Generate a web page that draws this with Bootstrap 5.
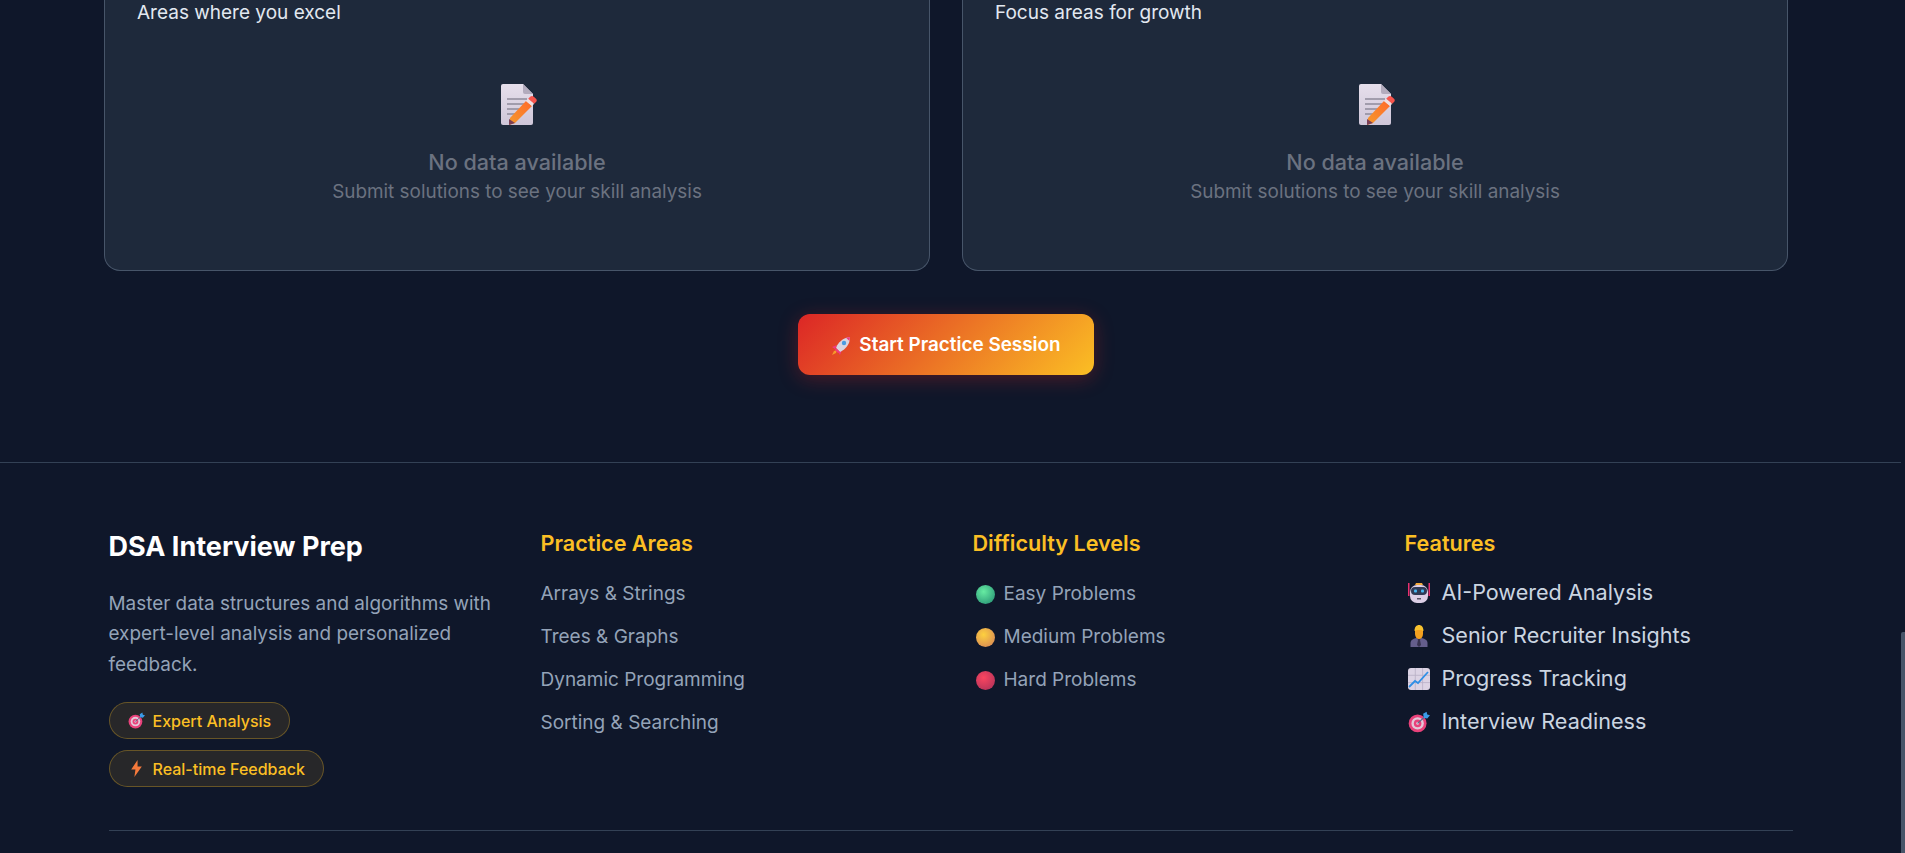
<!DOCTYPE html>
<html lang="en">
<head>
    <meta charset="UTF-8">
    <title>DSA Interview Prep</title>
    <link href="https://cdn.jsdelivr.net/npm/bootstrap@5.3.2/dist/css/bootstrap.min.css" rel="stylesheet">
    <style>
        html, body { height: 853px; overflow: hidden; }
        body {
            background: #0f172a;
            font-family: "Inter", "Liberation Sans", sans-serif;
            margin-right: 4px;
            position: relative;
        }
        .thumb-bar {
            position: fixed; top: 632px; right: 0; bottom: 0; width: 4px;
            background: #475569; border-top-left-radius: 2px;
        }
        .page-main { width: 1684px; margin-left: 104px; }
        .skill-grid { display: grid; grid-template-columns: 1fr 1fr; gap: 32px; }
        .skill-panel {
            height: 271px;
            background: #1e293b;
            border: 1px solid #475569;
            border-top: 0;
            border-radius: 0 0 16px 16px;
            padding: 0 32px;
        }
        .skill-sub { color: #e2e8f0; font-size: 19px; line-height: 25px; }
        .empty-state { text-align: center; padding-top: 59px; }
        .empty-state svg { display: block; margin: 0 auto 23px; }
        .empty-title { color: #6b7280; font-size: 21.6px; font-weight: 500; line-height: 28px; margin-bottom: 2px; }
        .empty-text { color: #6b7280; font-size: 18.9px; line-height: 28px; }
        .start-btn {
            width: 296px; height: 61px; margin-top: 43px; padding-top: 8px;
            border: 0; border-radius: 12px;
            background: linear-gradient(135deg, #dc2626, #fbbf24);
            box-shadow: 0 4px 20px rgba(220, 38, 38, .3);
            color: #fff; font-size: 18.9px; font-weight: 600;
        }
        .site-foot { margin-top: 87px; border-top: 1px solid #334155; padding-top: 65px; }
        .foot-wrap { width: 1684px; margin: 0 auto; }
        .foot-grid { display: grid; grid-template-columns: repeat(4, 1fr); column-gap: 44px; }
        .foot-brand { color: #fff; font-size: 27px; font-weight: 700; line-height: 38px; margin-bottom: 23px; }
        .foot-desc { color: #94a3b8; font-size: 18.9px; line-height: 30.4px; margin-bottom: 22px; }
        .foot-chip {
            display: inline-flex; align-items: center; gap: 8px;
            height: 37px; padding: 0 18px 0 18px;
            background: rgba(251, 191, 36, .1);
            border: 1px solid rgba(251, 191, 36, .3);
            border-radius: 19px;
            color: #fbbf24; font-size: 16px; font-weight: 500;
        }
        .chip-line { margin-bottom: 11px; }
        .foot-head { color: #fbbf24; font-size: 21.6px; font-weight: 600; line-height: 30px; margin-bottom: 15px; }
        .foot-list { list-style: none; margin: 0; padding: 0; }
        .foot-list li { height: 43px; display: flex; align-items: center; color: #94a3b8; font-size: 19px; }
        .foot-list .dot-icon { margin: 0 9px 0 3px; }
        .foot-list.feat-list { margin-top: -2px; }
        .feat-list li { color: #cbd5e1; font-size: 21.6px; }
        .feat-list svg { margin: 0 12px 0 3px; }
        .foot-line { border-top: 1px solid #334155; margin-top: 43px; }
    </style>
</head>
<body>
    <svg width="0" height="0" class="position-absolute">
        <defs>
            <linearGradient id="gPaper" x1="0" y1="0" x2="0" y2="1"><stop offset="0" stop-color="#e6dfec"/><stop offset="1" stop-color="#cfc6d8"/></linearGradient>
            <linearGradient id="gPencil" x1="0" y1="1" x2="1" y2="0"><stop offset="0" stop-color="#f59a2c"/><stop offset="1" stop-color="#ff6a2c"/></linearGradient>
            <radialGradient id="gGreen" cx=".4" cy=".35" r=".7"><stop offset="0" stop-color="#66eba2"/><stop offset="1" stop-color="#2f9e7a"/></radialGradient>
            <radialGradient id="gYellow" cx=".4" cy=".35" r=".7"><stop offset="0" stop-color="#fdd03f"/><stop offset="1" stop-color="#db8f52"/></radialGradient>
            <radialGradient id="gRed" cx=".4" cy=".35" r=".7"><stop offset="0" stop-color="#fb4560"/><stop offset="1" stop-color="#b8345a"/></radialGradient>
            <symbol id="icoTarget" viewBox="0 0 32 32">
                <circle cx="14" cy="18" r="13" fill="#e8417a"/>
                <circle cx="14" cy="18" r="9" fill="#e3c8d8"/>
                <circle cx="14" cy="18" r="5.5" fill="#e8417a"/>
                <circle cx="14" cy="18" r="2" fill="#e3c8d8"/>
                <path d="M14 18 26 7" stroke="#5b6b8c" stroke-width="1.8"/>
                <path d="M22 4l5-3 1 4 4 1-4 5-5-1z" fill="#3a9be8"/>
            </symbol>
            <symbol id="icoMemo" viewBox="-4 0 40 41">
                <path d="M2 0h20l10 10v29a2 2 0 0 1-2 2H2a2 2 0 0 1-2-2V2a2 2 0 0 1 2-2z" fill="url(#gPaper)"/>
                <path d="M22 0l10 10h-8a2 2 0 0 1-2-2z" fill="#b3abbd"/>
                <path d="M6 15h20M6 20h20M6 25h15M6 30h9" stroke="#8f8a9b" stroke-width="1.7"/>
                <path d="M9 34 25 17l6 5-17 17-6 2z" fill="url(#gPencil)"/>
                <path d="M25 17l2.2-2.2 6 5L31 22z" fill="#f1dfe0"/>
                <path d="M27.2 14.800l2-2c1-1 2.600-1 3.600 0l2.200 2c1 1 1 2.400 0 3.300l-1.800 1.700z" fill="#f8554c"/>
                <path d="M8 35l6 4-6 2z" fill="#7b3f55"/>
            </symbol>
        </defs>
    </svg>

    <main class="page-main">
        <div class="skill-grid">
            <div class="skill-panel">
                <div class="skill-sub">Areas where you excel</div>
                <div class="empty-state">
                    <svg width="40" height="41"><use href="#icoMemo"/></svg>
                    <div class="empty-title">No data available</div>
                    <div class="empty-text">Submit solutions to see your skill analysis</div>
                </div>
            </div>
            <div class="skill-panel">
                <div class="skill-sub">Focus areas for growth</div>
                <div class="empty-state">
                    <svg width="40" height="41"><use href="#icoMemo"/></svg>
                    <div class="empty-title">No data available</div>
                    <div class="empty-text">Submit solutions to see your skill analysis</div>
                </div>
            </div>
        </div>
        <div class="d-flex justify-content-center">
            <button class="btn start-btn d-flex align-items-center justify-content-center gap-2">
                <svg width="20" height="20" viewBox="0 0 20 20">
                    <path d="M6 9 1 11l3 2zM11 14l-2 5-2-3z" fill="#f0397f"/>
                    <path d="M6 14l-3 1-2 4 4-2z" fill="#f59a2c"/>
                    <path d="M5 12C7 6 12 2 19 1c0 7-4 12-10 15z" fill="#d9d4e0"/>
                    <path d="M5 12l4 4-2 1-3-3z" fill="#f0397f"/>
                    <path d="M15 1.800 19 1l-.6 4z" fill="#f0397f"/>
                    <circle cx="13" cy="7" r="2.200" fill="#4a9be0"/>
                </svg>
                <span>Start Practice Session</span>
            </button>
        </div>
    </main>

    <footer class="site-foot">
        <div class="foot-wrap">
            <div class="foot-grid">
                <div>
                    <div class="foot-brand">DSA Interview Prep</div>
                    <p class="foot-desc">Master data structures and algorithms with expert-level analysis and personalized feedback.</p>
                    <div class="chip-line">
                        <span class="foot-chip"><svg width="17" height="17"><use href="#icoTarget"/></svg>Expert Analysis</span>
                    </div>
                    <div>
                        <span class="foot-chip">
                            <svg width="17" height="17" viewBox="0 0 16 16"><path d="M9 0 3 9h4l-1 7 7-10H9z" fill="#f5793b"/></svg>Real-time Feedback
                        </span>
                    </div>
                </div>
                <div>
                    <div class="foot-head">Practice Areas</div>
                    <ul class="foot-list">
                        <li>Arrays &amp; Strings</li>
                        <li>Trees &amp; Graphs</li>
                        <li>Dynamic Programming</li>
                        <li>Sorting &amp; Searching</li>
                    </ul>
                </div>
                <div>
                    <div class="foot-head">Difficulty Levels</div>
                    <ul class="foot-list">
                        <li><svg class="dot-icon" width="19" height="19"><circle cx="9.500" cy="9.500" r="9.500" fill="url(#gGreen)"/></svg>Easy Problems</li>
                        <li><svg class="dot-icon" width="19" height="19"><circle cx="9.500" cy="9.500" r="9.500" fill="url(#gYellow)"/></svg>Medium Problems</li>
                        <li><svg class="dot-icon" width="19" height="19"><circle cx="9.500" cy="9.500" r="9.500" fill="url(#gRed)"/></svg>Hard Problems</li>
                    </ul>
                </div>
                <div>
                    <div class="foot-head">Features</div>
                    <ul class="foot-list feat-list">
                        <li>
                            <svg width="22" height="22" viewBox="0 0 22 22">
                                <path d="M7 3l1-2h6l1 2z" fill="#f2a93b"/>
                                <rect x="0" y="1" width="1.500" height="13" fill="#e8306f"/>
                                <rect x="20.500" y="1" width="1.500" height="13" fill="#e8306f"/>
                                <rect x="2" y="3" width="18" height="18" rx="7" fill="#dccfe6"/>
                                <rect x="3" y="5" width="16" height="8" rx="4" fill="#2f3a55"/>
                                <rect x="6" y="7.500" width="3" height="3" rx="1" fill="#49b6f0"/>
                                <rect x="13" y="7.500" width="3" height="3" rx="1" fill="#49b6f0"/>
                                <rect x="9" y="16" width="4" height="1.500" fill="#5a5468"/>
                            </svg>
                            AI-Powered Analysis
                        </li>
                        <li>
                            <svg width="22" height="22" viewBox="0 0 22 22">
                                <path d="M2.500 22v-4c0-3 3-5 8.500-5s8.500 2 8.500 5v4z" fill="#645e8c"/>
                                <path d="M9 13h4l-1 2 1 5-2 2-2-2 1-5z" fill="#37324f"/>
                                <path d="M7 5h8v4c0 3-2 5-4 5s-4-2-4-5z" fill="#f3a01f"/>
                                <path d="M6.500 6c0-4 2-6 4.500-6s4.500 2 4.500 6c-2-1.500-7-1.500-9 0z" fill="#f8c22e"/>
                            </svg>
                            Senior Recruiter Insights
                        </li>
                        <li>
                            <svg width="22" height="22" viewBox="0 0 22 22">
                                <rect x="0" y="0" width="22" height="22" rx="3" fill="#dcd3e4"/>
                                <path d="M7.300 0v22M14.600 0v22M0 7.300h22M0 14.600h22" stroke="#b9afc5" stroke-width=".8"/>
                                <path d="M1 19l6-6 3 2 10-11" fill="none" stroke="#2f8fe6" stroke-width="1.800"/>
                            </svg>
                            Progress Tracking
                        </li>
                        <li>
                            <svg width="22" height="22"><use href="#icoTarget"/></svg>
                            Interview Readiness
                        </li>
                    </ul>
                </div>
            </div>
            <div class="foot-line"></div>
        </div>
    </footer>
    <div class="thumb-bar"></div>

    <script src="https://cdn.jsdelivr.net/npm/bootstrap@5.3.2/dist/js/bootstrap.bundle.min.js"></script>
</body>
</html>
